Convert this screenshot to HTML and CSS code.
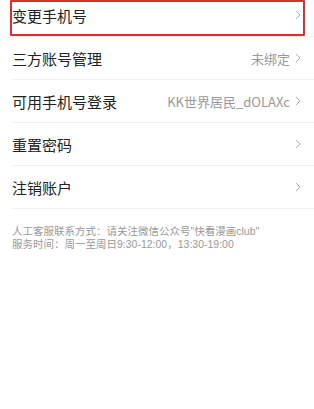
FILE: index.html
```html
<!DOCTYPE html>
<html lang="zh-CN">

<head>
    <meta charset="UTF-8" />
    <meta name="viewport" content="width=device-width, initial-scale=1.0" />
    <title>账号与安全</title>
    <link rel="stylesheet" href="styles.css">
</head>

<body>
    <ul class="settings">
        <li class="row">
            <span class="label">变更手机号</span>
            <span class="value"><svg class="arrow" viewBox="0 0 6 10"><polyline points="1,1 5,5 1,9" /></svg></span>
        </li>
        <li class="row">
            <span class="label">三方账号管理</span>
            <span class="value">未绑定<svg class="arrow" viewBox="0 0 6 10"><polyline points="1,1 5,5 1,9" /></svg></span>
        </li>
        <li class="row">
            <span class="label">可用手机号登录</span>
            <span class="value">KK世界居民_dOLAXc<svg class="arrow" viewBox="0 0 6 10"><polyline points="1,1 5,5 1,9" /></svg></span>
        </li>
        <li class="row">
            <span class="label">重置密码</span>
            <span class="value"><svg class="arrow" viewBox="0 0 6 10"><polyline points="1,1 5,5 1,9" /></svg></span>
        </li>
        <li class="row">
            <span class="label">注销账户</span>
            <span class="value"><svg class="arrow" viewBox="0 0 6 10"><polyline points="1,1 5,5 1,9" /></svg></span>
        </li>
    </ul>

    <div class="highlight"></div>

    <div class="service">
        <p>人工客服联系方式：请关注微信公众号"快看漫画club"</p>
        <p>服务时间：周一至周日9:30-12:00，13:30-19:00</p>
    </div>
</body>

</html>
```

FILE: styles.css
```css
body {
    margin: 0;
    background-color: #fff;
    color: #222;
    font-family: "Noto Sans CJK SC", "Noto Sans", sans-serif;
    position: relative;
}

.settings {
    list-style: none;
    margin: -6px 0 0 0;
    padding: 0 0 0 12px;
}

.row {
    height: 42px;
    display: flex;
    align-items: center;
    justify-content: space-between;
    border-bottom: 1px solid #f0f0f0;
    padding-right: 13px;
}

.label {
    font-size: 15px;
}

.value {
    display: flex;
    align-items: center;
    font-size: 13px;
    color: #999;
}

.arrow {
    width: 6px;
    height: 10px;
    margin-left: 5px;
    fill: none;
    stroke: #b0b0b0;
    stroke-width: 1;
}

.highlight {
    position: absolute;
    left: 10px;
    top: 0;
    width: 291px;
    height: 32px;
    border: 2px solid #d8302d;
    border-radius: 1px;
}

.service {
    padding: 16px 12px 0;
    font-family: "Liberation Sans", "Noto Sans CJK SC", sans-serif;
    font-size: 10.5px;
    color: #999;
}

.service p {
    margin: 0;
    line-height: 12.5px;
}
```
